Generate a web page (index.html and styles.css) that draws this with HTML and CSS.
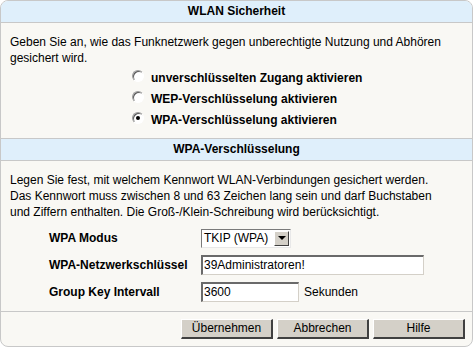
FILE: index.html
```html
<!DOCTYPE html>
<html lang="de">
<head>
<meta charset="utf-8">
<title>WLAN Sicherheit</title>
<link rel="stylesheet" href="styles.css">
</head>
<body>
<div class="panel">
  <div class="head head-first">WLAN Sicherheit</div>
  <div class="section">
    <p class="text">Geben Sie an, wie das Funknetzwerk gegen unberechtigte Nutzung und Abhören<br>gesichert wird.</p>
    <div class="radios">
      <div class="radio-row"><span class="radio"></span><span class="radio-label">unverschlüsselten Zugang aktivieren</span></div>
      <div class="radio-row"><span class="radio"></span><span class="radio-label">WEP-Verschlüsselung aktivieren</span></div>
      <div class="radio-row"><span class="radio checked"></span><span class="radio-label">WPA-Verschlüsselung aktivieren</span></div>
    </div>
  </div>
  <div class="head">WPA-Verschlüsselung</div>
  <div class="section section-2">
    <p class="text">Legen Sie fest, mit welchem Kennwort WLAN-Verbindungen gesichert werden.<br>Das Kennwort muss zwischen 8 und 63 Zeichen lang sein und darf Buchstaben<br>und Ziffern enthalten. Die Groß-/Klein-Schreibung wird berücksichtigt.</p>
    <div class="form">
      <div class="form-row">
        <span class="label">WPA Modus</span>
        <span class="select"><span class="select-value">TKIP (WPA)</span><span class="select-btn"><span class="tri"></span></span></span>
      </div>
      <div class="form-row">
        <span class="label">WPA-Netzwerkschlüssel</span>
        <span class="input input-wide">39Administratoren!</span>
      </div>
      <div class="form-row">
        <span class="label">Group Key Intervall</span>
        <span class="input input-short">3600</span>
        <span class="unit">Sekunden</span>
      </div>
    </div>
  </div>
  <div class="footer">
    <span class="btn">Übernehmen</span>
    <span class="btn">Abbrechen</span>
    <span class="btn">Hilfe</span>
  </div>
</div>
</body>
</html>
```
FILE: styles.css
```css
html, body {
  margin: 0;
  padding: 0;
  background: #ffffff;
}
body {
  font-family: "Liberation Sans", Arial, sans-serif;
  font-size: 12px;
  color: #000;
}
.panel {
  width: 473px;
  height: 347px;
  box-sizing: border-box;
  border: 1px solid #c8c8c8;
  border-radius: 8px;
  overflow: hidden;
  background: #f9f8f4;
  display: flex;
  flex-direction: column;
}
.head {
  height: 21px;
  line-height: 21px;
  background: #dfeffb;
  border-top: 1px solid #c8c8c8;
  border-bottom: 1px solid #c8c8c8;
  text-align: center;
  font-weight: bold;
}
.head-first {
  border-top: none;
}
.section {
  padding: 11px 9px 0 9px;
}
.text {
  margin: 0;
  line-height: 16px;
  white-space: nowrap;
}
.radios {
  padding: 4px 0 10px 122px;
  display: flex;
  flex-direction: column;
  gap: 5px;
}
.radio-row {
  display: flex;
  align-items: center;
  height: 16px;
  gap: 7px;
  font-weight: bold;
  white-space: nowrap;
}
.radio {
  width: 12px;
  height: 12px;
  box-sizing: border-box;
  border-radius: 50%;
  border: 1px solid;
  border-color: #9a9a9a #ffffff #ffffff #9a9a9a;
  background: #fff;
  box-shadow: inset 1px 1px 0 #5a5a5a;
  position: relative;
  margin-top: -4px;
}
.radio.checked::after {
  content: "";
  position: absolute;
  left: 3px;
  top: 3px;
  width: 4px;
  height: 4px;
  border-radius: 50%;
  background: #000;
}
.section-2 {
  padding-top: 11px;
}
.form {
  padding: 8px 0 0 39px;
  display: flex;
  flex-direction: column;
  gap: 7px;
}
.form-row {
  display: flex;
  align-items: center;
  height: 20px;
  white-space: nowrap;
}
.label {
  width: 152px;
  font-weight: bold;
}
.select {
  width: 90px;
  height: 19px;
  box-sizing: border-box;
  border-top: 1px solid #7a7a7a;
  border-left: 1px solid #7a7a7a;
  border-right: 1px solid #e8e8e8;
  border-bottom: 1px solid #e8e8e8;
  background: #fff;
  display: flex;
  align-items: stretch;
}
.select-value {
  flex: 1;
  padding-left: 2px;
  line-height: 17px;
}
.select-btn {
  width: 15px;
  margin: 1px;
  box-sizing: border-box;
  background: #d4d0c8;
  border-top: 1px solid #fff;
  border-left: 1px solid #fff;
  border-right: 1px solid #404040;
  border-bottom: 1px solid #404040;
  display: flex;
  align-items: center;
  justify-content: center;
}
.tri {
  width: 0;
  height: 0;
  border-left: 4px solid transparent;
  border-right: 4px solid transparent;
  border-top: 4px solid #000;
}
.input {
  height: 20px;
  box-sizing: border-box;
  border-top: 2px solid #6a6a6a;
  border-left: 2px solid #6a6a6a;
  border-right: 1px solid #d4d0c8;
  border-bottom: 1px solid #d4d0c8;
  background: #fff;
  padding-left: 1px;
  line-height: 17px;
}
.input-wide {
  width: 223px;
}
.input-short {
  width: 98px;
}
.unit {
  margin-left: 5px;
}
.footer {
  margin-top: auto;
  margin-bottom: 7px;
  border-top: 1px solid #c8c8c8;
  padding: 7px 7px 0 0;
  display: flex;
  justify-content: flex-end;
  gap: 4px;
}
.btn {
  width: 92px;
  height: 20px;
  box-sizing: border-box;
  background: #d4d0c8;
  border-top: 1px solid #ffffff;
  border-left: 1px solid #ffffff;
  border-right: 2px solid #404040;
  border-bottom: 2px solid #404040;
  text-align: center;
  line-height: 17px;
}
```
